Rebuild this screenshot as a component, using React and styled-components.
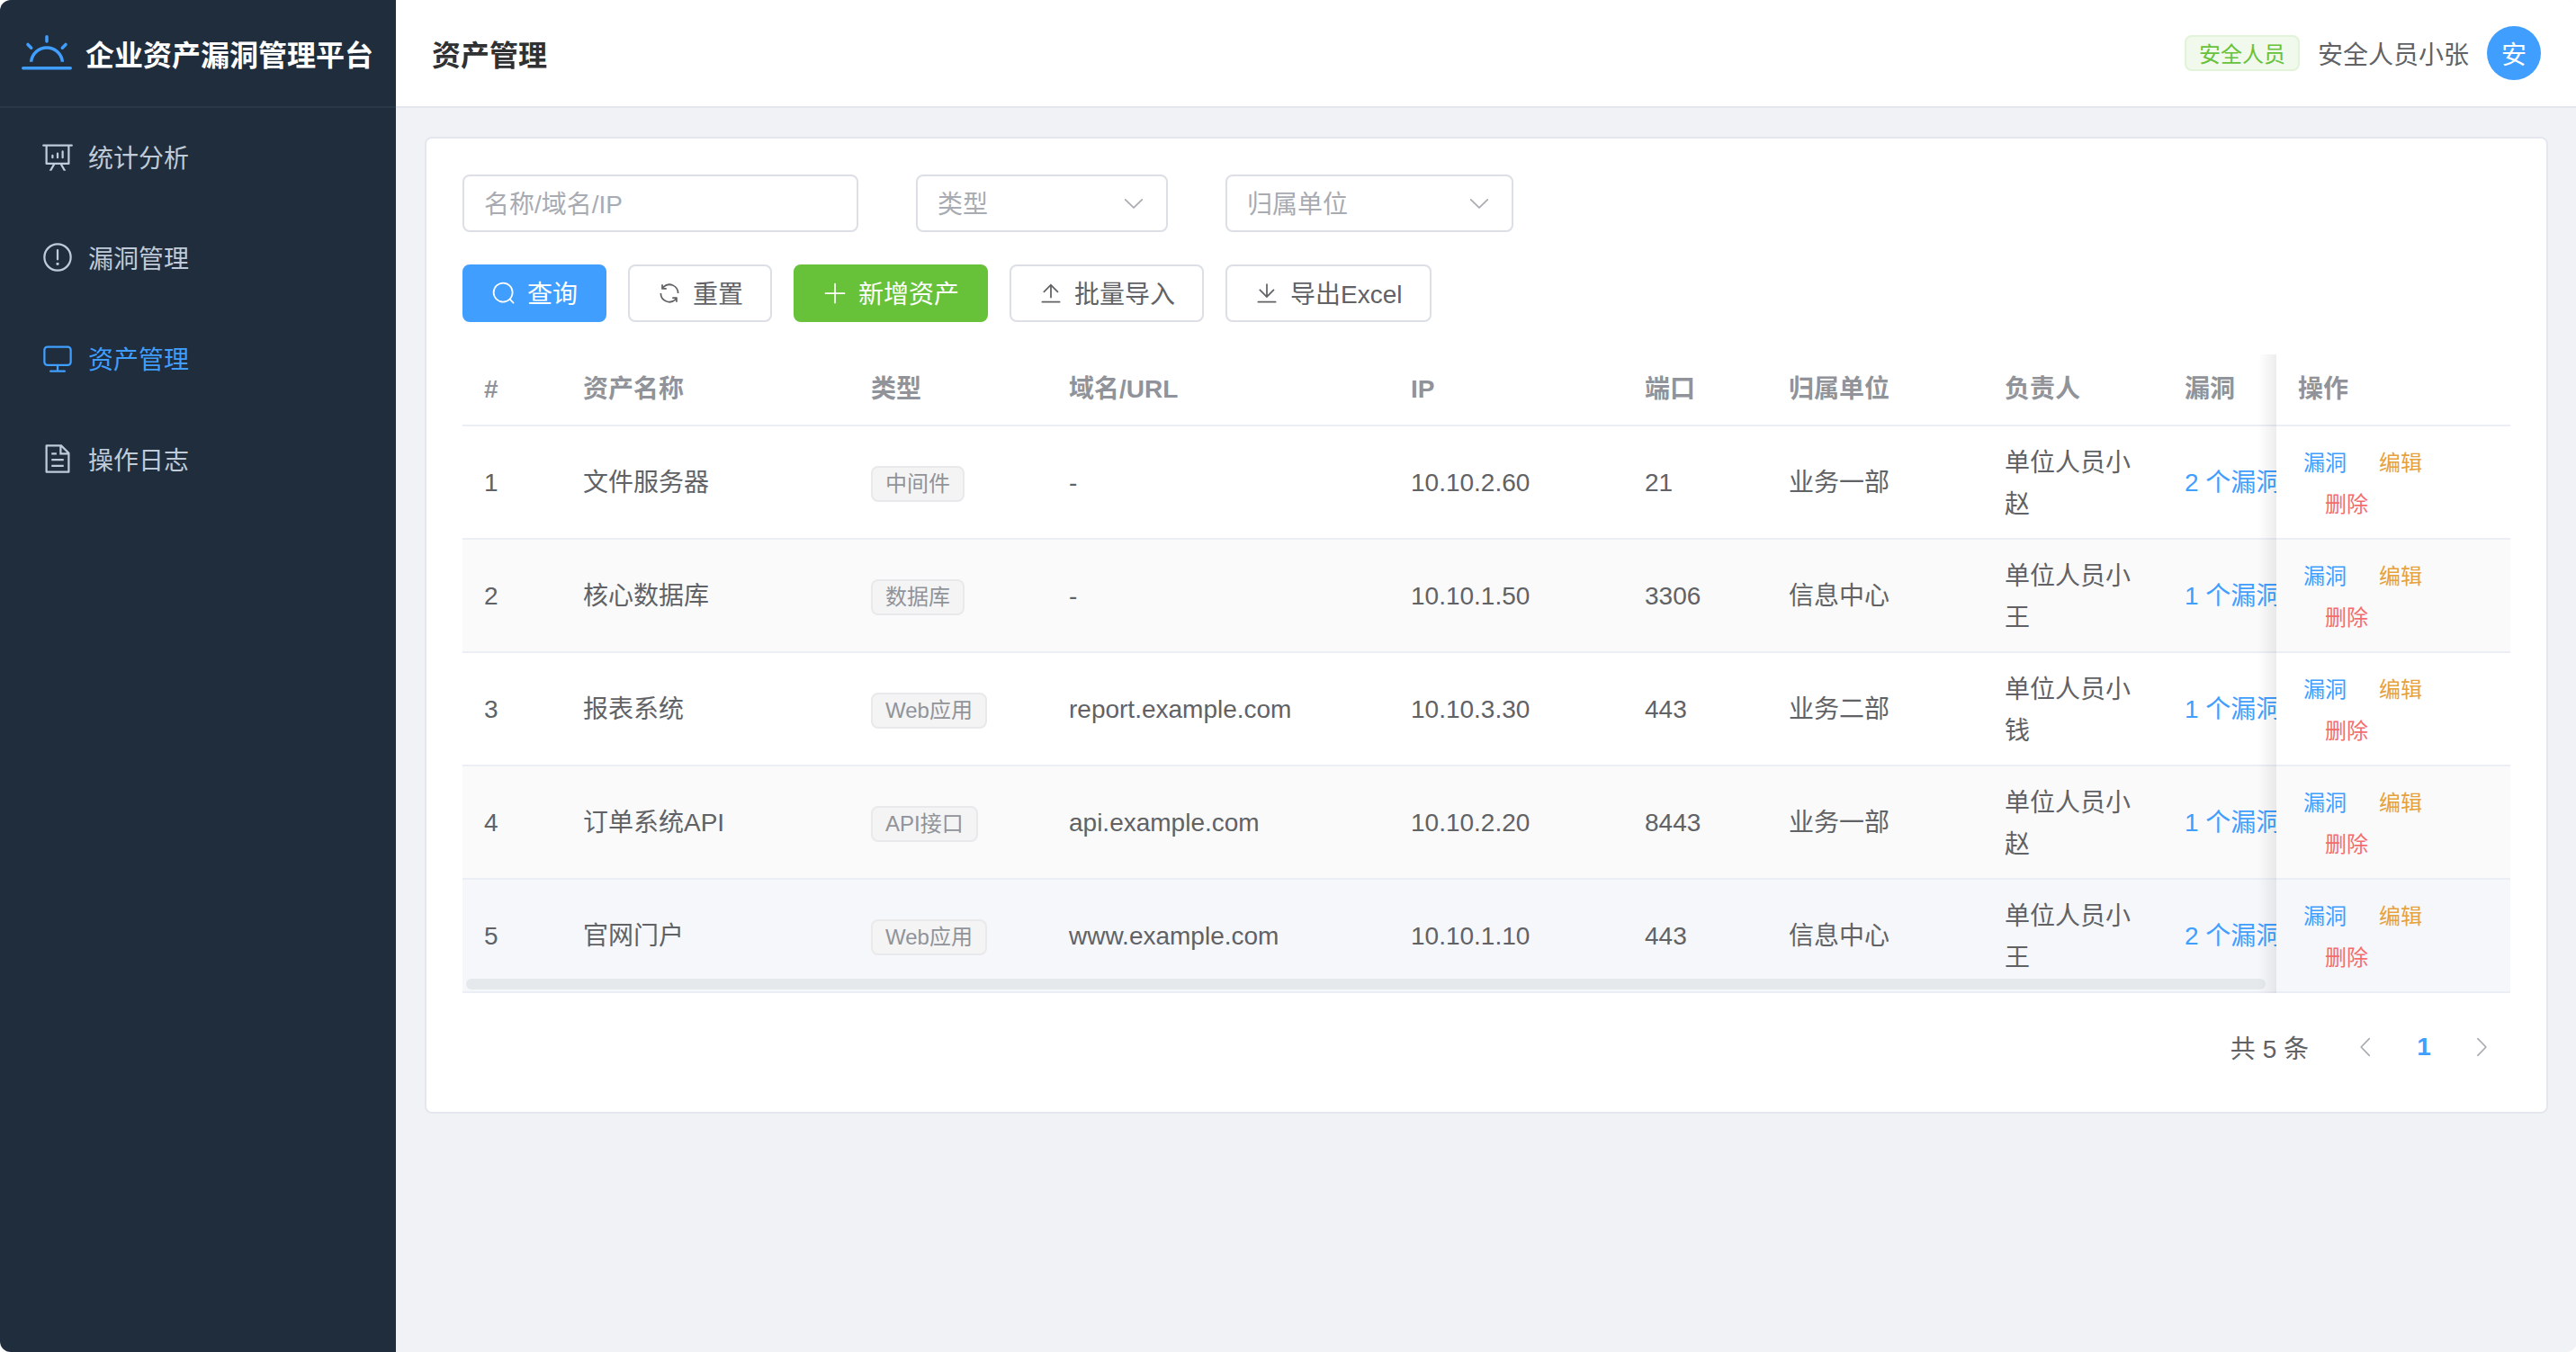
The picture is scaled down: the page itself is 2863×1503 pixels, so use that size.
import React from 'react'
import styled, { createGlobalStyle } from 'styled-components'

const GlobalStyle = createGlobalStyle`
  html, body {
    margin: 0;
    height: 100%;
    overflow: hidden;
    background: #fff;
  }
  body {
    font-family: "Liberation Sans", "Noto Sans CJK SC", sans-serif;
    font-size: 28px;
    color: #606266;
  }
  * { box-sizing: border-box; }
`

const ICONS = {
  sunrise: 'M32 768h960a32 32 0 1 1 0 64H32a32 32 0 1 1 0-64zm129.408-96a352 352 0 0 1 701.184 0h-64.32a288 288 0 0 0-572.544 0h-64.32zM512 128a32 32 0 0 1 32 32v96a32 32 0 0 1-64 0v-96a32 32 0 0 1 32-32zm407.296 168.704a32 32 0 0 1 0 45.248l-67.84 67.84a32 32 0 1 1-45.248-45.248l67.84-67.84a32 32 0 0 1 45.248 0zm-814.592 0a32 32 0 0 1 45.248 0l67.84 67.84a32 32 0 1 1-45.248 45.248l-67.84-67.84a32 32 0 0 1 0-45.248z',
  analysis: 'm665.216 768 110.848 192h-73.856L591.36 768H433.024L322.176 960H248.32l110.848-192H160a32 32 0 0 1-32-32V192H64a32 32 0 0 1 0-64h896a32 32 0 1 1 0 64h-64v544a32 32 0 0 1-32 32H665.216zM832 192H192v512h640V192zM352 448a32 32 0 0 1 32 32v64a32 32 0 0 1-64 0v-64a32 32 0 0 1 32-32zm160-64a32 32 0 0 1 32 32v128a32 32 0 0 1-64 0V416a32 32 0 0 1 32-32zm160-64a32 32 0 0 1 32 32v192a32 32 0 1 1-64 0V352a32 32 0 0 1 32-32z',
  warning: 'M512 64a448 448 0 1 1 0 896 448 448 0 0 1 0-896zm0 832a384 384 0 0 0 0-768 384 384 0 0 0 0 768zm48-176a48 48 0 1 1-96 0 48 48 0 0 1 96 0zm-48-464a32 32 0 0 1 32 32v288a32 32 0 0 1-64 0V288a32 32 0 0 1 32-32z',
  monitor: 'M544 768v128h192a32 32 0 1 1 0 64H288a32 32 0 1 1 0-64h192V768H192A128 128 0 0 1 64 640V256a128 128 0 0 1 128-128h640a128 128 0 0 1 128 128v384a128 128 0 0 1-128 128H544zM192 192a64 64 0 0 0-64 64v384a64 64 0 0 0 64 64h640a64 64 0 0 0 64-64V256a64 64 0 0 0-64-64H192z',
  document: 'M832 384H576V128H192v768h640V384zm-26.496-64L640 154.496V320h165.504zM160 64h480l256 256v608a32 32 0 0 1-32 32H160a32 32 0 0 1-32-32V96a32 32 0 0 1 32-32zm160 448h384v64H320v-64zm0-192h160v64H320v-64zm0 384h384v64H320v-64z',
  search: 'm795.904 750.72 124.992 124.928a32 32 0 0 1-45.248 45.248L750.656 795.904a416 416 0 1 1 45.248-45.248zM480 832a352 352 0 1 0 0-704 352 352 0 0 0 0 704z',
  refresh: 'M771.776 794.88A384 384 0 0 1 128 512h64a320 320 0 0 0 555.712 216.448H654.72a32 32 0 1 1 0-64h149.056a32 32 0 0 1 32 32v148.928a32 32 0 1 1-64 0v-50.56zM276.288 295.616h92.992a32 32 0 0 1 0 64H220.16a32 32 0 0 1-32-32V178.56a32 32 0 0 1 64 0v50.56A384 384 0 0 1 896.128 512h-64a320 320 0 0 0-555.776-216.384z',
  plus: 'M480 480V128a32 32 0 0 1 64 0v352h352a32 32 0 0 1 0 64H544v352a32 32 0 1 1-64 0V544H128a32 32 0 0 1 0-64h352z',
  upload: 'M160 832h704a32 32 0 1 1 0 64H160a32 32 0 1 1 0-64zm384-578.304V704h-64V247.296L237.248 490.048 192 444.8 508.8 128l316.8 316.8-45.312 45.248L544 253.696z',
  download: 'M160 832h704a32 32 0 1 1 0 64H160a32 32 0 1 1 0-64zm384-253.696 236.288-236.352 45.248 45.248L508.8 704 192 387.2l45.248-45.248L480 584.704V128h64v450.304z',
  down: 'M831.872 340.864 512 652.672 192.128 340.864a30.592 30.592 0 0 0-42.752 0 29.12 29.12 0 0 0 0 41.6L489.664 714.24a32 32 0 0 0 44.672 0l340.288-331.712a29.12 29.12 0 0 0 0-41.728 30.592 30.592 0 0 0-42.752 0z',
  left: 'M609.408 149.376 277.76 489.6a32 32 0 0 0 0 44.672l331.648 340.352a29.12 29.12 0 0 0 41.728 0 30.592 30.592 0 0 0 0-42.752L339.264 512l311.872-319.872a30.592 30.592 0 0 0 0-42.688 29.12 29.12 0 0 0-41.728 0z',
  right: 'M340.864 149.312a30.592 30.592 0 0 0 0 42.752L652.736 512 340.864 831.872a30.592 30.592 0 0 0 0 42.752 29.12 29.12 0 0 0 41.728 0L714.24 534.336a32 32 0 0 0 0-44.672L382.592 149.376a29.12 29.12 0 0 0-41.728 0z',
}

const Svg = styled.svg`
  width: ${p => p.$size || 28}px;
  height: ${p => p.$size || 28}px;
  flex: none;
  fill: ${p => p.$color || 'currentColor'};
`

const Icon = ({ name, size, color }) => (
  <Svg viewBox="0 0 1024 1024" $size={size} $color={color}>
    <path d={ICONS[name]} />
  </Svg>
)

const Shell = styled.div`
  display: flex;
  width: 2864px;
  height: 100vh;
  overflow: hidden;
  border-radius: 12px;
  background: #f0f2f5;
`

const Sidebar = styled.aside`
  width: 440px;
  flex: none;
  background: #1f2d3d;
`

const Brand = styled.div`
  height: 120px;
  padding: 2px 0 0 24px;
  display: flex;
  align-items: center;
  gap: 15px;
  border-bottom: 2px solid rgba(255, 255, 255, 0.05);
  color: #fff;
  font-size: 32px;
  font-weight: 700;
  white-space: nowrap;
`

const BrandTitle = styled.span`
  padding-bottom: 3px;
`

const Menu = styled.nav`
  display: flex;
  flex-direction: column;
`

const MenuItem = styled.div`
  height: 112px;
  display: flex;
  align-items: center;
  padding: 0 0 4px 40px;
  color: ${p => (p.$active ? '#409eff' : '#bfcbd9')};
`

const MenuIcon = styled.span`
  width: 48px;
  margin-right: 10px;
  display: flex;
  justify-content: center;
`

const Main = styled.div`
  flex: 1;
  min-width: 0;
  display: flex;
  flex-direction: column;
`

const Topbar = styled.header`
  height: 120px;
  flex: none;
  display: flex;
  align-items: center;
  justify-content: space-between;
  padding: 0 40px;
  background: #fff;
  border-bottom: 2px solid #e4e7ed;
`

const PageTitle = styled.h1`
  margin: 0;
  font-size: 32px;
  font-weight: 700;
  color: #303133;
`

const UserBox = styled.div`
  display: flex;
  align-items: center;
  gap: 20px;
`

const RoleTag = styled.span`
  height: 40px;
  padding: 0 14px 2px;
  display: inline-flex;
  align-items: center;
  font-size: 24px;
  color: #67c23a;
  background: #f0f9eb;
  border: 2px solid #e1f3d8;
  border-radius: 8px;
`

const Avatar = styled.div`
  width: 60px;
  height: 60px;
  border-radius: 50%;
  background: #409eff;
  color: #fff;
  display: flex;
  align-items: center;
  justify-content: center;
`

const Content = styled.main`
  flex: 1;
  padding: 32px;
`

const Card = styled.section`
  background: #fff;
  border: 2px solid #e4e7ed;
  border-radius: 8px;
  padding: 40px;
`

const FilterRow = styled.div`
  display: flex;
  gap: 64px;
  margin-bottom: 36px;
`

const Field = styled.div`
  width: ${p => p.$width}px;
  height: 64px;
  display: flex;
  align-items: center;
  justify-content: space-between;
  padding: 0 22px;
  border: 2px solid #dcdfe6;
  border-radius: 8px;
  color: #a8abb2;
`

const FieldText = styled.span`
  padding-bottom: 3px;
`

const ButtonRow = styled.div`
  display: flex;
  gap: 24px;
  margin-bottom: 36px;
`

const BUTTON_COLORS = {
  primary: '#409eff',
  success: '#67c23a',
}

const Button = styled.button`
  height: 64px;
  padding: 0 30px;
  display: inline-flex;
  align-items: center;
  gap: 12px;
  font: inherit;
  border-radius: 8px;
  border: 2px solid ${p => BUTTON_COLORS[p.$kind] || '#dcdfe6'};
  background: ${p => BUTTON_COLORS[p.$kind] || '#fff'};
  color: ${p => (BUTTON_COLORS[p.$kind] ? '#fff' : '#606266')};
`

const ButtonText = styled.span`
  padding-bottom: 3px;
`

const Table = styled.div`
  display: flex;
`

const ScrollPane = styled.div`
  position: relative;
  flex: 1;
  min-width: 0;
  overflow: hidden;
`

const FixedPane = styled.div`
  position: relative;
  width: 260px;
  flex: none;

  &::before {
    content: '';
    position: absolute;
    top: 0;
    bottom: 0;
    left: -20px;
    width: 20px;
    background: linear-gradient(to left, rgba(0, 0, 0, 0.07), rgba(0, 0, 0, 0));
  }
`

const COLUMNS = '110px 320px 220px 380px 260px 160px 240px 200px 200px'

const Row = styled.div`
  display: grid;
  grid-template-columns: ${p => p.$columns || '1fr'};
  height: ${p => (p.$head ? 80 : 126)}px;
  border-bottom: 2px solid #ebeef5;
  background: ${p => (p.$hover ? '#f5f7fa' : p.$striped ? '#fafafa' : '#fff')};
`

const Cell = styled.div`
  display: flex;
  align-items: center;
  padding: 1px 24px 0;
  min-width: 0;
  line-height: 46px;
`

const OwnerCell = styled(Cell)`
  padding-top: 3px;
`

const HeadCell = styled(Cell)`
  padding-top: 0;
  font-weight: 700;
  color: #909399;
`

const TypeTag = styled.span`
  height: 40px;
  margin-top: 3px;
  padding: 0 14px;
  display: inline-flex;
  align-items: center;
  white-space: nowrap;
  font-size: 24px;
  color: #909399;
  background: #f4f4f5;
  border: 2px solid #e9e9eb;
  border-radius: 8px;
`

const VulnLink = styled.span`
  color: #409eff;
  white-space: nowrap;
`

const OpsCell = styled.div`
  padding: 18px 24px 0;
  font-size: 24px;
  line-height: 46px;
`

const OpLink = styled.span`
  display: inline-block;
  padding: 0 6px;
  color: ${p => p.$color};

  & + & {
    margin-left: 24px;
  }
`

const Scrollbar = styled.div`
  position: absolute;
  left: 4px;
  right: 12px;
  bottom: 4px;
  height: 12px;
  border-radius: 6px;
  background: rgba(144, 147, 153, 0.14);
`

const Pagination = styled.div`
  display: flex;
  justify-content: flex-end;
  align-items: center;
  height: 64px;
  margin-top: 28px;
`

const Total = styled.span`
  margin-right: 32px;
`

const PageButton = styled.span`
  width: 64px;
  display: flex;
  justify-content: center;
  color: ${p => (p.$current ? '#409eff' : '#a8abb2')};
  font-weight: ${p => (p.$current ? 700 : 400)};
`

const MENU = [
  { icon: 'analysis', label: '统计分析' },
  { icon: 'warning', label: '漏洞管理' },
  { icon: 'monitor', label: '资产管理', active: true },
  { icon: 'document', label: '操作日志' },
]

const HEADERS = ['#', '资产名称', '类型', '域名/URL', 'IP', '端口', '归属单位', '负责人', '漏洞']

const ASSETS = [
  { id: 1, name: '文件服务器', type: '中间件', url: '-', ip: '10.10.2.60', port: '21', unit: '业务一部', owner: '单位人员小赵', vulns: 2 },
  { id: 2, name: '核心数据库', type: '数据库', url: '-', ip: '10.10.1.50', port: '3306', unit: '信息中心', owner: '单位人员小王', vulns: 1 },
  { id: 3, name: '报表系统', type: 'Web应用', url: 'report.example.com', ip: '10.10.3.30', port: '443', unit: '业务二部', owner: '单位人员小钱', vulns: 1 },
  { id: 4, name: '订单系统API', type: 'API接口', url: 'api.example.com', ip: '10.10.2.20', port: '8443', unit: '业务一部', owner: '单位人员小赵', vulns: 1 },
  { id: 5, name: '官网门户', type: 'Web应用', url: 'www.example.com', ip: '10.10.1.10', port: '443', unit: '信息中心', owner: '单位人员小王', vulns: 2 },
]

const BUTTONS = [
  { icon: 'search', label: '查询', kind: 'primary' },
  { icon: 'refresh', label: '重置' },
  { icon: 'plus', label: '新增资产', kind: 'success' },
  { icon: 'upload', label: '批量导入' },
  { icon: 'download', label: '导出Excel' },
]

export default function App() {
  return (
    <Shell>
      <GlobalStyle />
      <Sidebar>
        <Brand>
          <Icon name="sunrise" size={56} color="#409eff" />
          <BrandTitle>企业资产漏洞管理平台</BrandTitle>
        </Brand>
        <Menu>
          {MENU.map(item => (
            <MenuItem key={item.label} $active={item.active}>
              <MenuIcon><Icon name={item.icon} size={36} /></MenuIcon>
              {item.label}
            </MenuItem>
          ))}
        </Menu>
      </Sidebar>
      <Main>
        <Topbar>
          <PageTitle>资产管理</PageTitle>
          <UserBox>
            <RoleTag>安全人员</RoleTag>
            <span>安全人员小张</span>
            <Avatar>安</Avatar>
          </UserBox>
        </Topbar>
        <Content>
          <Card>
            <FilterRow>
              <Field $width={440}><FieldText>名称/域名/IP</FieldText></Field>
              <Field $width={280}><FieldText>类型</FieldText><Icon name="down" color="#a8abb2" /></Field>
              <Field $width={320}><FieldText>归属单位</FieldText><Icon name="down" color="#a8abb2" /></Field>
            </FilterRow>
            <ButtonRow>
              {BUTTONS.map(b => (
                <Button key={b.label} $kind={b.kind}>
                  <Icon name={b.icon} />
                  <ButtonText>{b.label}</ButtonText>
                </Button>
              ))}
            </ButtonRow>
            <Table>
              <ScrollPane>
                <Row $head $columns={COLUMNS}>
                  {HEADERS.map(h => <HeadCell key={h}>{h}</HeadCell>)}
                </Row>
                {ASSETS.map((a, i) => (
                  <Row key={a.id} $columns={COLUMNS} $striped={i % 2 === 1} $hover={i === 4}>
                    <Cell>{a.id}</Cell>
                    <Cell>{a.name}</Cell>
                    <Cell><TypeTag>{a.type}</TypeTag></Cell>
                    <Cell>{a.url}</Cell>
                    <Cell>{a.ip}</Cell>
                    <Cell>{a.port}</Cell>
                    <Cell>{a.unit}</Cell>
                    <OwnerCell>{a.owner}</OwnerCell>
                    <Cell><VulnLink>{a.vulns} 个漏洞</VulnLink></Cell>
                  </Row>
                ))}
                <Scrollbar />
              </ScrollPane>
              <FixedPane>
                <Row $head>
                  <HeadCell>操作</HeadCell>
                </Row>
                {ASSETS.map((a, i) => (
                  <Row key={a.id} $striped={i % 2 === 1} $hover={i === 4}>
                    <OpsCell>
                      <OpLink $color="#409eff">漏洞</OpLink>
                      <OpLink $color="#e6a23c">编辑</OpLink>
                      <OpLink $color="#f56c6c">删除</OpLink>
                    </OpsCell>
                  </Row>
                ))}
              </FixedPane>
            </Table>
            <Pagination>
              <Total>共 5 条</Total>
              <PageButton><Icon name="left" /></PageButton>
              <PageButton $current>1</PageButton>
              <PageButton><Icon name="right" /></PageButton>
            </Pagination>
          </Card>
        </Content>
      </Main>
    </Shell>
  )
}
